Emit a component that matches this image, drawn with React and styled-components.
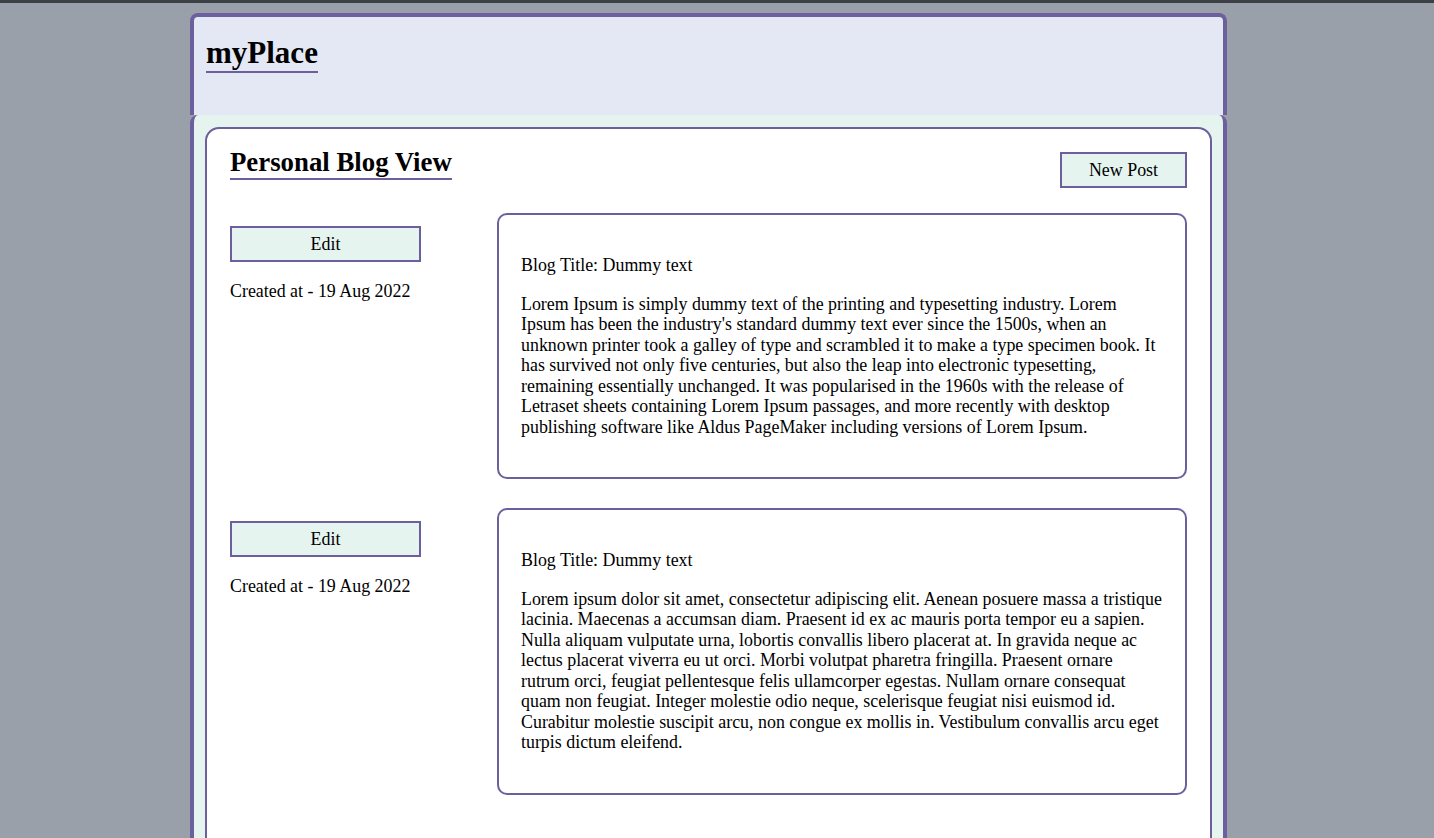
import styled, { createGlobalStyle } from "styled-components";

const GlobalStyle = createGlobalStyle`
  html, body {
    margin: 0;
    padding: 0;
  }
  body {
    background-color: #9aa0a9;
    border-top: 3px solid #3c3f44;
    font-family: "Liberation Serif", "Times New Roman", serif;
    font-size: 17.9px;
    color: #000;
  }
`;

const PURPLE = "#6c5f9d";
const MINT = "#e6f4ef";

const Page = styled.div`
  width: 1417px;
  padding-top: 10px;
`;

const Shell = styled.div`
  width: 1037px;
  margin: 0 auto;
`;

const Header = styled.header`
  box-sizing: border-box;
  height: 102px;
  padding: 18px 12px 0;
  background-color: #e4e8f4;
  border: 4px solid ${PURPLE};
  border-bottom: none;
  border-radius: 8px 8px 0 0;
`;

const Brand = styled.h1`
  display: inline-block;
  margin: 0;
  font-size: 31px;
  font-weight: bold;
  border-bottom: 2px solid ${PURPLE};
`;

const Main = styled.main`
  box-sizing: border-box;
  min-height: 760px;
  padding: 12px 11px 0;
  background-color: ${MINT};
  border: 4px solid ${PURPLE};
  border-top: none;
  border-radius: 8px 8px 0 0;
`;

const Card = styled.section`
  background-color: #fff;
  border: 2px solid ${PURPLE};
  border-radius: 14px;
  padding: 18px 23px 60px;
`;

const CardHead = styled.div`
  display: flex;
  justify-content: space-between;
  align-items: flex-start;
  margin-bottom: 25px;
`;

const Title = styled.h2`
  margin: 0;
  font-size: 26.8px;
  font-weight: bold;
  border-bottom: 2px solid ${PURPLE};
`;

const Button = styled.button`
  box-sizing: border-box;
  width: ${(p) => p.$width}px;
  height: ${(p) => p.$height}px;
  margin-top: ${(p) => p.$offset || 0}px;
  padding: 0;
  font-family: inherit;
  font-size: 17.9px;
  color: #000;
  background-color: ${MINT};
  border: 2px solid ${PURPLE};
  cursor: pointer;
`;

const PostList = styled.div`
  display: flex;
  flex-direction: column;
  gap: 29px;
`;

const PostRow = styled.div`
  display: grid;
  grid-template-columns: 267px 1fr;
  align-items: start;
`;

const Meta = styled.div`
  display: flex;
  flex-direction: column;
  align-items: flex-start;
`;

const Created = styled.p`
  margin: 19px 0 0;
  line-height: 20.5px;
`;

const PostBox = styled.article`
  border: 2px solid ${PURPLE};
  border-radius: 10px;
  padding: 22px;
  line-height: 20.5px;

  p {
    margin: 18px 0;
  }
`;

const posts = [
  {
    title: "Dummy text",
    created: "19 Aug 2022",
    body: "Lorem Ipsum is simply dummy text of the printing and typesetting industry. Lorem Ipsum has been the industry's standard dummy text ever since the 1500s, when an unknown printer took a galley of type and scrambled it to make a type specimen book. It has survived not only five centuries, but also the leap into electronic typesetting, remaining essentially unchanged. It was popularised in the 1960s with the release of Letraset sheets containing Lorem Ipsum passages, and more recently with desktop publishing software like Aldus PageMaker including versions of Lorem Ipsum.",
  },
  {
    title: "Dummy text",
    created: "19 Aug 2022",
    body: "Lorem ipsum dolor sit amet, consectetur adipiscing elit. Aenean posuere massa a tristique lacinia. Maecenas a accumsan diam. Praesent id ex ac mauris porta tempor eu a sapien. Nulla aliquam vulputate urna, lobortis convallis libero placerat at. In gravida neque ac lectus placerat viverra eu ut orci. Morbi volutpat pharetra fringilla. Praesent ornare rutrum orci, feugiat pellentesque felis ullamcorper egestas. Nullam ornare consequat quam non feugiat. Integer molestie odio neque, scelerisque feugiat nisi euismod id. Curabitur molestie suscipit arcu, non congue ex mollis in. Vestibulum convallis arcu eget turpis dictum eleifend.",
  },
];

function PostItem({ post }) {
  return (
    <PostRow>
      <Meta>
        <Button $width={191} $height={36} $offset={13}>Edit</Button>
        <Created>Created at - {post.created}</Created>
      </Meta>
      <PostBox>
        <p>Blog Title: {post.title}</p>
        <p>{post.body}</p>
      </PostBox>
    </PostRow>
  );
}

export default function App() {
  return (
    <>
      <GlobalStyle />
      <Page>
        <Shell>
          <Header>
            <Brand>myPlace</Brand>
          </Header>
          <Main>
            <Card>
              <CardHead>
                <Title>Personal Blog View</Title>
                <Button $width={127} $height={36} $offset={5}>New Post</Button>
              </CardHead>
              <PostList>
                {posts.map((post, i) => (
                  <PostItem key={i} post={post} />
                ))}
              </PostList>
            </Card>
          </Main>
        </Shell>
      </Page>
    </>
  );
}
